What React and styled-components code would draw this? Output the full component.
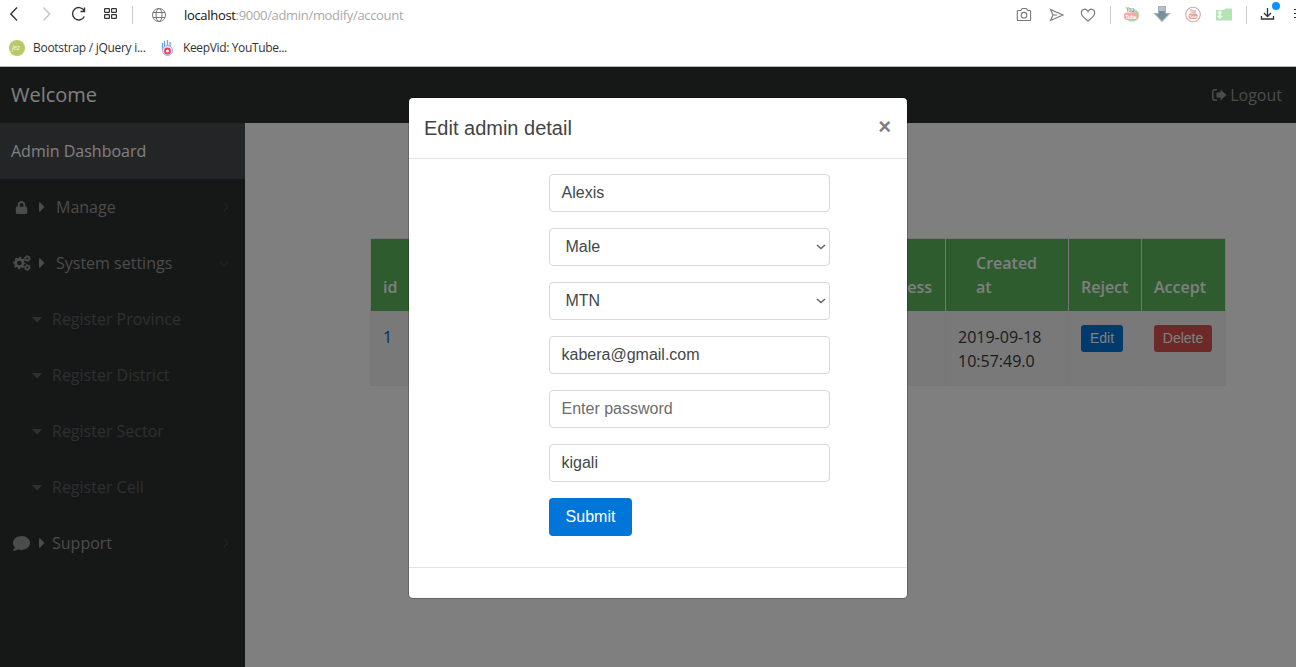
import React from "react";
import styled, { createGlobalStyle } from "styled-components";
import { FaLock, FaCaretRight, FaCaretDown, FaComment } from "react-icons/fa";

const GlobalStyle = createGlobalStyle`
  * { box-sizing: border-box; }
  body { margin: 0; overflow: hidden; background: #fff; font-family: "Open Sans", sans-serif; }
`;

const Screen = styled.div`
  width: 1296px;
  height: 667px;
  display: flex;
  flex-direction: column;
  overflow: hidden;
`;

/* ---------- browser chrome ---------- */
const Chrome = styled.div`
  height: 67px;
  flex: none;
  background: #fff;
  border-bottom: 1px solid #a9b9c2;
`;
const AddressBar = styled.div`
  height: 30px;
  display: flex;
  align-items: center;
  padding-left: 7px;
  svg { flex: none; display: block; }
`;
const NavIcons = styled.div`
  display: flex;
  width: 177px;
  flex: none;
`;
const Url = styled.div`
  width: 831px;
  flex: none;
  font-size: 13px;
  line-height: 18px;
  letter-spacing: -0.32px;
  color: #a9a9a9;
  padding-bottom: 1px;
  span { color: #111; }
`;
const Bookmarks = styled.div`
  display: flex;
  align-items: center;
  height: 35px;
  padding-left: 8px;
`;
const Bookmark = styled.div`
  display: flex;
  align-items: center;
  gap: 7px;
  width: ${(p) => p.$width}px;
  font-size: 12px;
  letter-spacing: ${(p) => p.$spacing};
  white-space: nowrap;
  color: #333;
  svg { flex: none; }
`;

/* ---------- page ---------- */
const Page = styled.div`
  position: relative;
  flex: 1;
  display: flex;
  flex-direction: column;
  min-height: 0;
`;
const TopBar = styled.header`
  height: 56px;
  flex: none;
  background: #2d302f;
  display: flex;
  align-items: center;
  justify-content: space-between;
  padding: 0 14px 0 11px;
`;
const Brand = styled.div`
  padding-bottom: 2px;
  font-size: 20px;
  color: #fff;
`;
const Logout = styled.a`
  display: flex;
  align-items: center;
  gap: 3px;
  font-size: 16px;
  color: #969797;
`;
const Body = styled.div`
  display: flex;
  flex: 1;
`;
const Sidebar = styled.nav`
  width: 245px;
  flex: none;
  background: #2d302f;
`;
const DashboardLink = styled.div`
  height: 56px;
  line-height: 56px;
  padding-left: 11px;
  background: #494a4e;
  color: #fff;
  font-size: 16px;
`;
const MenuItem = styled.div`
  display: flex;
  align-items: center;
  height: 56px;
  padding: 0 13px 0 11px;
  font-size: 16px;
  color: #969797;
`;
const MenuIcon = styled.span`
  width: 21px;
  display: flex;
  justify-content: center;
`;
const Caret = styled.span`
  width: ${(p) => p.$width}px;
  display: flex;
  padding-left: 2px;
`;
const MenuLabel = styled.span`
  flex: 1;
`;
const SubItem = styled.div`
  display: flex;
  align-items: center;
  height: 56px;
  padding-left: 29px;
  font-size: 16px;
  color: #5c5e63;
  svg { margin-right: 7px; }
`;
const Main = styled.main`
  flex: 1;
  background: #fff;
  padding: 115px 70px 0 125px;
`;
const Table = styled.div`
  width: 856px;
  border: 1px solid #eceeef;
`;
const HeadRow = styled.div`
  display: grid;
  grid-template-columns: 97px 478px 123px 73px 83px;
  height: 72px;
  background: #5cb85c;
  color: #fff;
  font-weight: 600;
`;
const HeadCell = styled.div`
  padding: 0 ${(p) => (p.$end ? 13 : 12)}px 12px ${(p) => p.$indent || 12}px;
  border-right: ${(p) => (p.$last ? "0" : "1px solid #eceeef")};
  display: flex;
  align-items: flex-end;
  justify-content: ${(p) => (p.$end ? "flex-end" : "flex-start")};
  font-size: 16px;
  line-height: 24px;
`;
const DataRow = styled(HeadRow)`
  height: 74px;
  background: #f2f2f2;
  color: #373a3c;
  font-weight: 400;
`;
const Cell = styled.div`
  padding: 14px 0 0 12px;
  border-right: ${(p) => (p.$last ? "0" : "1px solid #eceeef")};
  font-size: 16px;
  line-height: 24px;
  color: ${(p) => (p.$link ? "#0260b0" : "inherit")};
`;
const SmallButton = styled.button`
  display: block;
  height: 27px;
  width: ${(p) => p.$width}px;
  border: 0;
  border-radius: 3px;
  padding: 0 0 2px;
  background: ${(p) => (p.$danger ? "#d9534f" : "#0275d8")};
  color: #fff;
  font: 14px "Liberation Sans", Arial, sans-serif;
`;

/* ---------- modal ---------- */
const Backdrop = styled.div`
  position: absolute;
  inset: 0;
  background: rgba(0, 0, 0, 0.5);
  padding: 30px 0 0 408px;
`;
const Dialog = styled.section`
  width: 500px;
  height: 502px;
  background: #fff;
  background-clip: padding-box;
  border: 1px solid rgba(0, 0, 0, 0.2);
  border-radius: 5px;
  font-family: "Liberation Sans", Arial, sans-serif;
  color: #414446;
`;
const DialogHeader = styled.div`
  height: 61px;
  padding: 0 15px;
  display: flex;
  align-items: center;
  justify-content: space-between;
  border-bottom: 1px solid #e5e5e5;
  font-size: 20px;
`;
const Close = styled.span`
  padding: 0 1px 3px 0;
  font-size: 22px;
  font-weight: 700;
  line-height: 22px;
  color: #7f7f7f;
`;
const Form = styled.div`
  height: 409px;
  padding: 15px 77px 0 140px;
  display: flex;
  flex-direction: column;
  gap: 16px;
  border-bottom: 1px solid #e5e5e5;
`;
const Field = styled.div`
  display: flex;
  align-items: center;
  justify-content: space-between;
  width: 281px;
  height: 38px;
  padding: ${(p) => (p.$select ? "0 3px 0 15.5px" : "0 2px 0 11.5px")};
  border: 1px solid #d6d7d8;
  border-radius: 4px;
  font-size: 16px;
  line-height: 18px;
  color: ${(p) => (p.$placeholder ? "#6d6d6d" : "#44474a")};
`;
const Submit = styled.button`
  width: 83px;
  height: 38px;
  border: 0;
  border-radius: 4px;
  background: #0275d8;
  color: #fff;
  font: 16px "Liberation Sans", Arial, sans-serif;
`;

const Navigation = () => (
  <svg width="176" height="30" fill="none" stroke="#333" strokeWidth="1.4">
    <path d="M10 7.5 3.8 14l6.200 6.500" />
    <path d="M36.500 7.500 42.700 14l-6.200 6.500" stroke="#c4c4c4" />
    <path d="M77 10.500A6.200 6.200 0 1 0 77.300 16.500M77.500 7.500v4h-4" />
    <g strokeWidth="1.200">
      <rect x="97.600" y="8.600" width="4.800" height="3.800" rx=".7" />
      <rect x="104.600" y="8.600" width="4.800" height="3.800" rx=".7" />
      <rect x="97.600" y="14.600" width="4.800" height="3.800" rx=".7" />
      <rect x="104.600" y="14.600" width="4.800" height="3.800" rx=".7" />
    </g>
    <path d="M125.500 6v18" stroke="#ccc" strokeWidth="1" />
    <g stroke="#777" strokeWidth="1">
      <circle cx="152" cy="15" r="6.500" />
      <ellipse cx="152" cy="15" rx="3" ry="6.500" />
      <path d="M146 12.500h12M146 17.500h12" />
    </g>
  </svg>
);

const Extensions = () => (
  <svg width="281" height="30" fill="none" stroke="#777" strokeWidth="1.100">
    <path d="M3.500 10.500h2.300L7.300 8.500h4l1.500 2h2.200q.6 0 .6.700v8.600q0 .7-.7.700H3q-.7 0-.7-.7v-8.600q0-.7.700-.7z" />
    <circle cx="9" cy="15.200" r="2.800" />
    <path d="M35.500 9.500 48 15 35.500 20.500 38 15zM38 15h4" />
    <path d="M73 21c-2.500-2.200-6.700-4.800-6.700-8.300 0-4.400 5.200-4.600 6.700-1.200 1.500-3.400 6.700-3.200 6.700 1.200 0 3.500-4.200 6.100-6.700 8.300z" />
    <path d="M95.500 6v18M231.500 6v18" stroke="#ccc" strokeWidth="1" />
    <g stroke="none">
      <path d="M119 9q6 2 5 8-1.500 5-9 4.500l-4-2z" fill="#a7dca5" />
      <rect x="109" y="12.500" width="13.500" height="7.500" rx="3" fill="#f5a9a9" />
      <text x="111" y="12" fontFamily="Liberation Sans" fontSize="7" textLength="8" lengthAdjust="spacingAndGlyphs" fontWeight="700" fill="#929292">You</text>
      <text x="110.500" y="18.500" fontFamily="Liberation Sans" fontSize="6" textLength="11" lengthAdjust="spacingAndGlyphs" fontWeight="700" fill="#fff">Tube</text>
    </g>
    <path d="M143.500 6.500h7v7h4L147 21.500l-7.500-8h4z" fill="#78909a" stroke="#a3b3ba" />
    <path d="M144 7h6v4h-6z" fill="#b3c1c6" stroke="none" />
    <circle cx="178" cy="14.500" r="7.300" stroke="#dda8a8" />
    <g stroke="none">
      <rect x="173.500" y="13.500" width="9" height="5.500" rx="2" fill="#f29b9b" />
      <text x="175" y="13" fontFamily="Liberation Sans" fontSize="4.500" textLength="6" lengthAdjust="spacingAndGlyphs" fontWeight="700" fill="#999">You</text>
      <text x="174.300" y="18" fontFamily="Liberation Sans" fontSize="4" textLength="7.500" lengthAdjust="spacingAndGlyphs" fontWeight="700" fill="#fff">Tube</text>
      <path d="M201 10h8l2-1.500h6V20.500h-16z" fill="#b2e4b5" />
      <path d="m204.800 10 2.700 3h-1.500v3h2l-3.200 3-3.200-3h2v-3h-1.500z" fill="#effbe9" />
    </g>
    <g stroke="#333" strokeWidth="1.300">
      <path d="M252.500 8v8M249 13l3.500 3.500L256 13M246.500 16v3h12v-3" />
      <path d="M279 9.500h2M279 13.500h2M279 17.500h2" strokeWidth="1" />
    </g>
    <circle cx="261" cy="6" r="4" fill="#0795ff" stroke="none" />
  </svg>
);

const JqIcon = () => (
  <svg width="18" height="18">
    <circle cx="9" cy="9" r="8" fill="#b8ca68" />
    <text x="4" y="11" fontSize="7" fontStyle="italic" fill="#f6f8e8">jez</text>
  </svg>
);
const KeepVidIcon = () => (
  <svg width="17" height="18" fill="none">
    <path d="M3.500 4v6M5.500 2v6M8.500 1v6M11 3v5" stroke="#64a9ef" strokeWidth="1.300" />
    <circle cx="8.500" cy="11.500" r="5" fill="#eeeaff" stroke="#a5a4ef" />
    <circle cx="8.500" cy="12" r="2.500" stroke="#eb3d56" strokeWidth="1.800" />
  </svg>
);
const Chevron = ({ down }) => (
  <svg width="12" height="12" fill="none" stroke="#494d4f">
    <path d={down ? "m2 4 4 4 4-4" : "m4 2 4 4-4 4"} transform={down ? "translate(-2 1)" : undefined} />
  </svg>
);
const SelectArrow = () => (
  <svg width="10" height="8" fill="none" stroke="#666" strokeWidth="1.500">
    <path d="m1 2 4 3.500L9 2" />
  </svg>
);
const SignOut = () => (
  <svg width="15" height="12" fill="#969797">
    <path d="M5 .8H3Q.8.8.8 3v6q0 2.200 2.200 2.200h2" fill="none" stroke="#969797" strokeWidth="1.500" />
    <path d="M4.500 3.500H8.500V.5L14.500 6l-6 5.500v-3h-4z" />
  </svg>
);
const Gears = () => (
  <svg width="18" height="16" fill="none" stroke="#969797">
    <circle cx="6.300" cy="8" r="3.700" strokeWidth="2.700" />
    <circle cx="6.300" cy="8" r="5.400" strokeWidth="1.600" strokeDasharray="2.120 2.120" strokeDashoffset="1" />
    <circle cx="14.300" cy="3.500" r="1.900" strokeWidth="1.500" />
    <circle cx="14.300" cy="3.500" r="2.900" strokeWidth="1" strokeDasharray="1.520 1.520" />
    <circle cx="14.300" cy="12.500" r="1.900" strokeWidth="1.500" />
    <circle cx="14.300" cy="12.500" r="2.900" strokeWidth="1" strokeDasharray="1.520 1.520" />
  </svg>
);

const SUB_ITEMS = ["Register Province", "Register District", "Register Sector", "Register Cell"];

export default function App() {
  return (
    <Screen>
      <GlobalStyle />
      <Chrome>
        <AddressBar>
          <NavIcons><Navigation /></NavIcons>
          <Url><span>localhost</span>:9000/admin/modify/account</Url>
          <Extensions />
        </AddressBar>
        <Bookmarks>
          <Bookmark $width={151} $spacing="-0.28px"><JqIcon />Bootstrap / jQuery i...</Bookmark>
          <Bookmark $width={140} $spacing="-0.36px"><KeepVidIcon />KeepVid: YouTube...</Bookmark>
        </Bookmarks>
      </Chrome>
      <Page>
        <TopBar>
          <Brand>Welcome</Brand>
          <Logout><SignOut />Logout</Logout>
        </TopBar>
        <Body>
          <Sidebar>
            <DashboardLink>Admin Dashboard</DashboardLink>
            <MenuItem>
              <MenuIcon><FaLock size={13} /></MenuIcon>
              <Caret $width={24}><FaCaretRight size={16} /></Caret>
              <MenuLabel>Manage</MenuLabel><Chevron />
            </MenuItem>
            <MenuItem>
              <MenuIcon><Gears /></MenuIcon>
              <Caret $width={24}><FaCaretRight size={16} /></Caret>
              <MenuLabel>System settings</MenuLabel><Chevron down />
            </MenuItem>
            {SUB_ITEMS.map((name) => (
              <SubItem key={name}><FaCaretDown size={16} />{name}</SubItem>
            ))}
            <MenuItem>
              <MenuIcon><FaComment size={17} /></MenuIcon>
              <Caret $width={20}><FaCaretRight size={16} /></Caret>
              <MenuLabel>Support</MenuLabel><Chevron />
            </MenuItem>
          </Sidebar>
          <Main>
            <Table>
              <HeadRow>
                <HeadCell>id</HeadCell>
                <HeadCell $end>Address</HeadCell>
                <HeadCell $indent={30}>Created<br />at</HeadCell>
                <HeadCell>Reject</HeadCell>
                <HeadCell $last>Accept</HeadCell>
              </HeadRow>
              <DataRow>
                <Cell $link>1</Cell>
                <Cell />
                <Cell>2019-09-18<br />10:57:49.0</Cell>
                <Cell><SmallButton $width={42}>Edit</SmallButton></Cell>
                <Cell $last><SmallButton $width={58} $danger>Delete</SmallButton></Cell>
              </DataRow>
            </Table>
          </Main>
        </Body>
        <Backdrop>
          <Dialog>
            <DialogHeader>Edit admin detail<Close>×</Close></DialogHeader>
            <Form>
              <Field>Alexis</Field>
              <Field $select>Male<SelectArrow /></Field>
              <Field $select>MTN<SelectArrow /></Field>
              <Field>kabera@gmail.com</Field>
              <Field $placeholder>Enter password</Field>
              <Field>kigali</Field>
              <Submit>Submit</Submit>
            </Form>
          </Dialog>
        </Backdrop>
      </Page>
    </Screen>
  );
}
